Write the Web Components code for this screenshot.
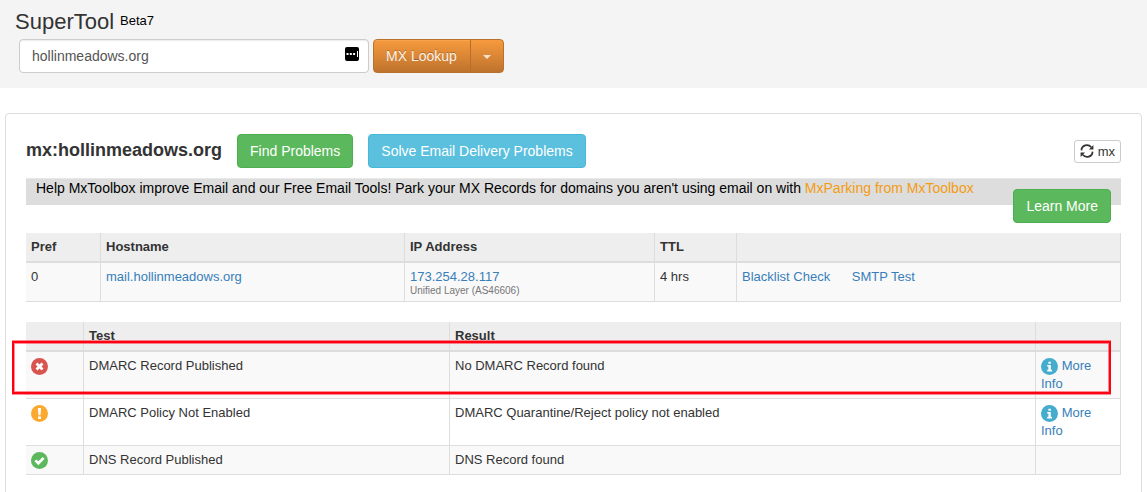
<!DOCTYPE html>
<html lang="en">
<head>
<meta charset="utf-8">
<title>SuperTool</title>
<style>
    body { margin: 0; background: #fff; color: #333; font: 13px/18px "Liberation Sans", Arial, sans-serif; }
</style>
</head>
<body>
<super-tool></super-tool>

<script>
/**
 * Status icons, selected with the type attribute: error, warning, ok, info
 */
const statusIcons = {
    error: ['#d9534f', '<path d="M5.5 5.5 11.5 11.5M11.5 5.5 5.5 11.5" stroke="#fff" stroke-width="2.8"/>'],
    warning: ['#fba930', '<path d="M6.9 3h3.2l-.6 7.2h-2z" fill="#fff"/><rect x="7.1" y="11.2" width="2.8" height="2.8" rx=".6" fill="#fff"/>'],
    ok: ['#5cb85c', '<path d="M4.4 8.4 7.4 11.3 12.6 5.9" fill="none" stroke="#fff" stroke-width="2.7"/>'],
    info: ['#46acce', '<path d="M7.4 3.7h2.4v2H7.4zM6.2 7h3.6v4.8H11v1.6H6.2v-1.6h1.2V8.6H6.2z" fill="#fff"/>']
};

customElements.define('status-icon', class extends HTMLElement {

    constructor() {
        super();
        this.attachShadow({mode: 'open'});
    }

    connectedCallback() {
        const [color, mark] = statusIcons[this.getAttribute('type')];
        this.shadowRoot.innerHTML = `
            <style>
                :host { display: inline-block; width: 17px; height: 17px; vertical-align: top; margin-top: 1px; }
                svg { display: block; }
            </style>
            <svg width="17" height="17" viewBox="0 0 17 17"><circle cx="8.5" cy="8.5" r="8.5" fill="${color}"/>${mark}</svg>`;
    }

});

/**
 * Button. Kinds: success, info, small
 */
customElements.define('tool-button', class extends HTMLElement {

    constructor() {
        super();
        this.attachShadow({mode: 'open'});
        this.shadowRoot.innerHTML = `
            <style>
                :host { display: block; flex: none; }
                button { display: flex; align-items: center; box-sizing: border-box; height: 34px; margin: 0; padding: 0 12px; border: 1px solid; border-radius: 4px; color: #fff; font: 14px/20px "Liberation Sans", Arial, sans-serif; white-space: nowrap; }
                :host([kind=success]) button { background: #5cb85c; border-color: #4cae4c; }
                :host([kind=info]) button { background: #5bc0de; border-color: #46b8da; }
                :host([kind=small]) button { height: 23px; padding: 0 5px; gap: 4px; border-color: #ccc; border-radius: 3px; background: #fff; color: #333; font-size: 13px; line-height: 18px; }
            </style>
            <button><slot></slot></button>`;
    }

});

customElements.define('search-bar', class extends HTMLElement {

    constructor() {
        super();
        this.attachShadow({mode: 'open'});
        this.shadowRoot.innerHTML = `
            <style>
                :host { display: block; box-sizing: border-box; height: 88px; padding: 9px 0 0 15px; background: #f4f4f4; }
                .title { display: flex; height: 30px; }
                h1 { margin: 0; font-size: 22px; font-weight: normal; line-height: 26px; }
                sup { margin-left: 6px; color: #000; font-size: 13px; line-height: 23px; vertical-align: baseline; }
                .row { display: flex; gap: 4px; margin-left: 4px; }
                .field { display: flex; align-items: center; justify-content: space-between; box-sizing: border-box; width: 350px; height: 34px; padding: 0 9px 0 12px; border: 1px solid #ccc; border-radius: 4px; background: #fff; color: #555; font-size: 14px; box-shadow: inset 0 1px 1px rgba(0,0,0,.075); }
                .field svg { margin-top: -4px; }
                .lookup { display: flex; box-sizing: border-box; width: 131px; height: 34px; border: 1px solid #b8712e; border-radius: 4px; background: linear-gradient(#f79a3e, #be732d); color: #fdf3e8; font-size: 14px; line-height: 32px; text-shadow: 0 -1px 0 rgba(0,0,0,.25); }
                .lookup span { width: 97px; padding-left: 12px; box-sizing: border-box; border-right: 1px solid #b96f2b; box-shadow: inset 0 1px 0 rgba(255,255,255,.1); }
                .lookup i { margin: 15px 0 0 12px; width: 0; height: 0; border: 4px solid transparent; border-top-color: #fbe3cb; border-bottom: 0; }
            </style>
            <div class="title"><h1>SuperTool</h1><sup>Beta7</sup></div>
            <div class="row">
                <div class="field"><span>hollinmeadows.org</span>
                    <svg width="14" height="14" viewBox="0 0 14 14"><rect width="14" height="14" rx="2"/><path d="M1.5 6h2v2h-2zM4.8 6h2v2h-2zM8.1 6h2v2h-2zM12 4h1v6h-1z" fill="#fff"/></svg>
                </div>
                <div class="lookup"><span>MX Lookup</span><i></i></div>
            </div>`;
    }

});

/**
 * Table with column widths from the cols attribute.
 * Cells are slotted in order; cells with class "head" are the header row.
 */
customElements.define('result-table', class extends HTMLElement {

    constructor() {
        super();
        this.attachShadow({mode: 'open'});
        this.shadowRoot.innerHTML = `
            <style>
                :host { display: grid; }
                ::slotted(*) { box-sizing: border-box; min-width: 0; padding: 5px; border-right: 1px solid #ddd; border-bottom: 1px solid #ddd; }
                ::slotted(.head) { height: 30px; border-bottom-width: 2px; background: #eee; font-weight: bold; }
                ::slotted(.odd) { background: #f9f9f9; }
            </style>
            <slot></slot>`;
    }

    connectedCallback() {
        this.style.gridTemplateColumns = this.getAttribute('cols');
    }

});

customElements.define('mark-box', class extends HTMLElement {

    constructor() {
        super();
        this.attachShadow({mode: 'open'});
        this.shadowRoot.innerHTML = `
            <style>
                :host { position: absolute; left: 12px; top: 341px; box-sizing: border-box; width: 1099px; height: 53px; border: 2px solid #ff0012; box-shadow: 0 1px 0 rgba(255,0,18,.45), 0 -1px 0 rgba(255,0,18,.45), inset 0 0 0 1px rgba(255,0,18,.45); pointer-events: none; }
            </style>`;
    }

});

customElements.define('super-tool', class extends HTMLElement {

    constructor() {
        super();
        this.attachShadow({mode: 'open'});
        this.shadowRoot.innerHTML = `
            <style>
                :host { display: flex; flex-direction: column; position: relative; height: 492px; overflow: hidden; }
                search-bar { flex: none; }
                main { flex: 1 0 auto; box-sizing: border-box; height: 420px; margin: 25px 5px 0; padding: 20px; border: 1px solid #ddd; border-radius: 4px; }
                a { color: #377eba; text-decoration: none; }
                .heading { display: flex; align-items: center; gap: 15px; height: 34px; }
                .heading h2 { margin: -2px 0 0; font-size: 18px; line-height: 20px; }
                .heading tool-button[kind=small] { margin: 1px 0 0 auto; }
                .heading svg { margin-top: -2px; }
                .banner { display: flex; justify-content: space-between; box-sizing: border-box; height: 27px; margin: 10px 0 28px; padding: 0 10px; border-top: 1px solid #e8e8e8; background: #ddd; color: #000; font-size: 14px; line-height: 18px; }
                .banner tool-button { margin-top: 10px; }
                .banner a { color: #f39c12; }
                result-table { margin-bottom: 20px; }
                small { display: block; margin-top: -1px; color: #777; font-size: 10px; line-height: 12px; }
                .host { height: 39px; }
                .links a { margin-right: 18px; }
            </style>
            <search-bar></search-bar>
            <main>
                <div class="heading">
                    <h2>mx:hollinmeadows.org</h2>
                    <tool-button kind="success">Find Problems</tool-button>
                    <tool-button kind="info">Solve Email Delivery Problems</tool-button>
                    <tool-button kind="small"><svg width="14" height="14" viewBox="0 0 14 14"><path d="M1.4 6.4A5.5 5.5 0 0 1 11.2 3.2M12.6 7.6A5.5 5.5 0 0 1 2.8 10.8" fill="none" stroke="#333" stroke-width="1.7"/><path d="M13.4 1v4.4H9zM.6 13V8.6H5z" fill="#333"/></svg>mx</tool-button>
                </div>
                <div class="banner">
                    <span>Help MxToolbox improve Email and our Free Email Tools! Park your MX Records for domains you aren't using email on with <a>MxParking from MxToolbox</a></span>
                    <tool-button kind="success">Learn More</tool-button>
                </div>
                <result-table cols="75px 304px 250px 82px 384px">
                    <div class="head">Pref</div>
                    <div class="head">Hostname</div>
                    <div class="head">IP Address</div>
                    <div class="head">TTL</div>
                    <div class="head"></div>
                    <div class="odd host">0</div>
                    <div class="odd host"><a>mail.hollinmeadows.org</a></div>
                    <div class="odd host"><a>173.254.28.117</a><small>Unified Layer (AS46606)</small></div>
                    <div class="odd host">4 hrs</div>
                    <div class="odd host links"><a>Blacklist Check</a> <a>SMTP Test</a></div>
                </result-table>
                <result-table cols="58px 366px 586px 85px">
                    <div class="head"></div>
                    <div class="head">Test</div>
                    <div class="head">Result</div>
                    <div class="head"></div>
                    <div class="odd"><status-icon type="error"></status-icon></div>
                    <div class="odd">DMARC Record Published</div>
                    <div class="odd">No DMARC Record found</div>
                    <div class="odd"><status-icon type="info"></status-icon> <a>More Info</a></div>
                    <div><status-icon type="warning"></status-icon></div>
                    <div>DMARC Policy Not Enabled</div>
                    <div>DMARC Quarantine/Reject policy not enabled</div>
                    <div><status-icon type="info"></status-icon> <a>More Info</a></div>
                    <div class="odd"><status-icon type="ok"></status-icon></div>
                    <div class="odd">DNS Record Published</div>
                    <div class="odd">DNS Record found</div>
                    <div class="odd"></div>
                </result-table>
            </main>
            <mark-box></mark-box>`;
    }

});
</script>
</body>
</html>
